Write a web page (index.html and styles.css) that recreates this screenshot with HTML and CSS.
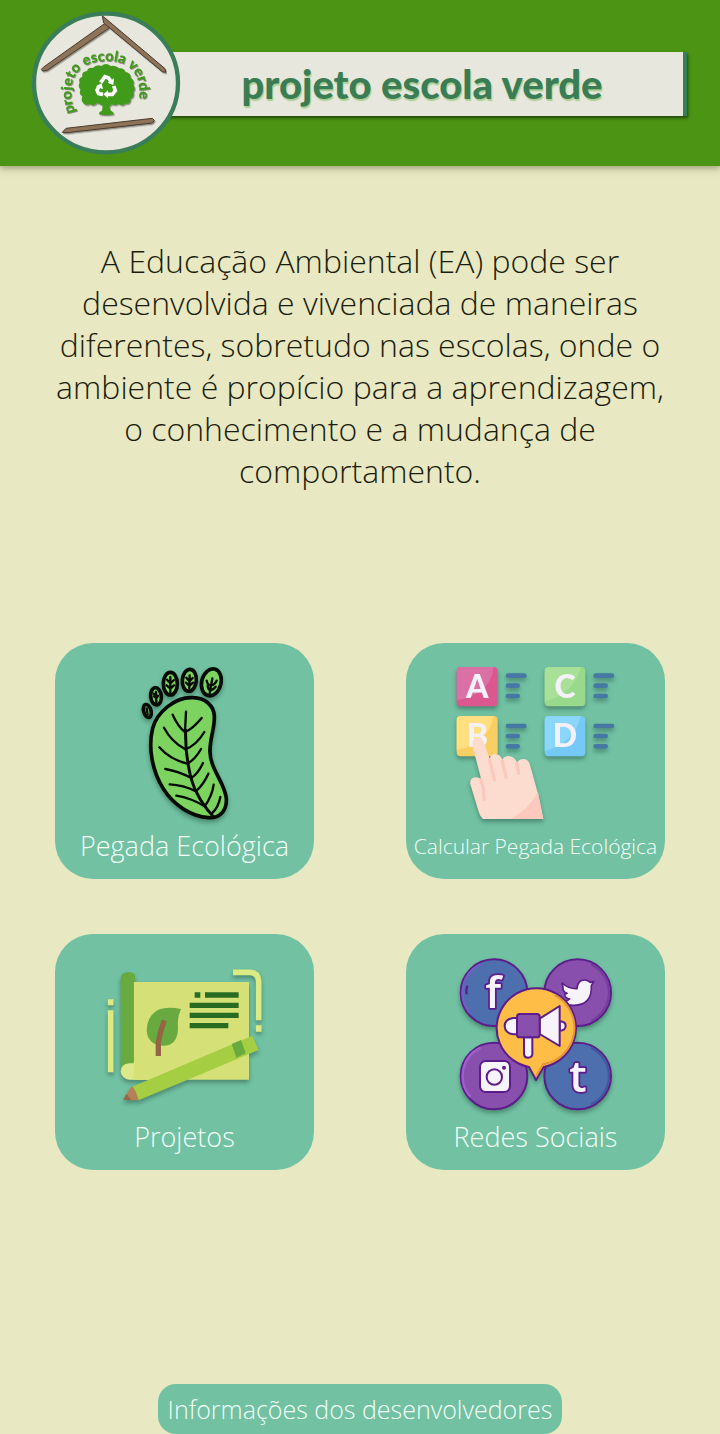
FILE: index.html
```html
<!DOCTYPE html>
<html lang="pt-BR">
<head>
<meta charset="utf-8">
<meta name="viewport" content="width=device-width, initial-scale=1">
<title>Projeto Escola Verde</title>
<link rel="stylesheet" href="styles.css">
</head>
<body class="page">
<header class="header">
  <svg class="emblem" viewBox="28 22 456 456" aria-hidden="true">
    <defs>
      <path id="arc" d="M166 338C134 232 178 184 262 184C345 184 376 240 350 340"/>
    </defs>
    <ellipse cx="259" cy="250" rx="216" ry="208" fill="#e7e7dd" stroke="#3a7d59" stroke-width="13"/>
    <g class="emblem-beams" stroke="#4a3a2e" stroke-width="3" stroke-linejoin="round">
      <path fill="#8d7459" d="M65 209L72 202L256 71L270 78L267 86L82 212L69 214Z"/>
      <path fill="#8d7459" d="M248 49L256 55L436 207L438 218L428 216L252 70Z"/>
      <path fill="#8d7459" d="M128 398L139 386L398 356L404 362L398 370L141 399Z"/>
    </g>
    <g class="emblem-tree">
      <path fill="#419b1b" d="M252 346L238 344Q236 337 247 333L249 319Q239 309 231 311Q218 322 211 312Q199 320 191 310Q182 302 189 289Q175 284 183 270Q173 260 180 249Q174 236 188 231Q185 216 202 214Q206 202 220 205Q230 193 245 199Q259 187 273 199Q288 195 298 206Q313 204 317 217Q334 219 333 235Q347 241 340 255Q350 265 341 276Q345 291 333 296Q333 315 317 312Q307 322 297 312Q284 319 277 314L269 320L272 333Q283 336 282 344L268 346Z"/>
      <g fill="none" stroke="#fff" stroke-width="11">
        <path d="M243 249L256 231L267 235L276 249"/>
        <path d="M282 259L287 273L278 284L262 284"/>
        <path d="M250 284L237 282L232 271L240 257"/>
      </g>
      <path fill="#fff" d="M283 236L281 256L264 249ZM265 272L265 296L251 284ZM229 260L246 251L250 269Z"/>
    </g>
    <text class="emblem-text"><textPath href="#arc" startOffset="0">projeto escola verde</textPath></text>
  </svg>
  <h1 class="banner">projeto escola verde</h1>
</header>

<main class="content">
  <p class="intro">A Educação Ambiental (EA) pode ser desenvolvida e vivenciada de maneiras diferentes, sobretudo nas escolas, onde o ambiente é propício para a aprendizagem, o conhecimento e a mudança de comportamento.</p>

  <nav class="menu">
    <a class="card" href="#pegada">
      <svg class="card-icon" viewBox="150 90 510 480" aria-hidden="true">
        <g fill="#7dd35f" stroke="#050a04" stroke-width="11">
          <path d="M430 188C375 184 320 233 308 280C293 340 308 412 341 463C371 511 425 545 475 548C507 551 531 528 529 491C526 444 478 400 480 347C480 307 494 283 493 244C492 211 464 189 430 188Z"/>
          <ellipse cx="484" cy="142" rx="29" ry="41" transform="rotate(14 484 142)"/>
          <ellipse cx="418" cy="136" rx="21" ry="33" transform="rotate(5 418 136)"/>
          <ellipse cx="361" cy="146" rx="21" ry="34"/>
          <ellipse cx="318" cy="184" rx="16" ry="26" transform="rotate(-6 318 184)"/>
          <ellipse cx="292" cy="228" rx="11" ry="20" transform="rotate(-16 292 228)"/>
        </g>
        <g fill="none" stroke="#050a04" stroke-width="7" stroke-linecap="round" stroke-linejoin="round">
          <path stroke-width="9" d="M407 286C405 350 417 430 440 473Q457 509 489 544"/>
          <path d="M408 230L405 290M368 239Q384 275 405 291Q428 282 455 249M342 278Q364 320 406 343Q440 330 463 291M328 337Q360 374 412 386Q436 373 453 342M346 402Q386 409 424 429Q444 416 459 384M359 448Q400 450 438 469Q462 446 475 416M379 482Q423 489 464 514Q486 484 491 449M485 536Q506 516 511 486"/>
          <path d="M479 175L487 130M470 137Q472 151 483 151Q495 150 500 137M473 152Q474 164 481 167Q490 164 497 155M418 161L419 121M409 128L418 139L428 129M408 143L418 153L429 143M361 173L361 126M351 134L361 145L372 135M350 151L361 161L372 151M319 203L318 171M312 184L319 190L324 182M311 176L318 180M293 238L290 220"/>
        </g>
      </svg>
      <span class="card-label">Pegada Ecológica</span>
    </a>

    <a class="card" href="#calcular">
      <svg class="card-icon" viewBox="152 90 510 480" aria-hidden="true">
        <g>
          <rect x="169" y="96" width="123" height="118" rx="12" fill="#dc5790"/>
          <path fill="#db70a5" d="M181 96H280Q270 180 169 196V108Q169 96 181 96Z"/>
          <rect x="433" y="96" width="122" height="118" rx="12" fill="#99d98c"/>
          <path fill="#a9e097" d="M445 96H542Q520 176 433 200V108Q433 96 445 96Z"/>
          <rect x="169" y="243" width="123" height="121" rx="12" fill="#f9ce63"/>
          <path fill="#ffdf80" d="M181 243H280Q262 330 169 345V255Q169 243 181 243Z"/>
          <rect x="433" y="243" width="122" height="121" rx="12" fill="#75c9f7"/>
          <path fill="#8bd6fb" d="M445 243H542Q522 325 433 348V255Q433 243 445 243Z"/>
        </g>
        <g class="key-letters">
          <text x="231" y="188">A</text>
          <text x="494" y="188">C</text>
          <text x="231" y="337">B</text>
          <text x="494" y="337">D</text>
        </g>
        <path fill="none" stroke="#4678a4" stroke-width="14" stroke-linecap="round" d="M323 122H372M323 152H352M323 183H352M586 122H635M586 152H616M586 183H616M323 273H372M323 303H352M323 334H352M586 273H635M586 303H616M586 334H616"/>
        <path fill="#fddcd0" d="M248 552Q239 544 235 530L210 448Q207 427 229 427L242 431L217 334Q213 313 229 308Q246 307 251 323L268 371Q272 357 285 357Q300 358 306 374Q311 363 326 363Q343 365 350 382Q358 371 371 372Q385 374 389 390L413 476L429 552Z"/>
        <path fill="#fdc8bd" d="M413 471L429 552H331Q382 526 413 471Z"/>
        <path fill="none" stroke="#fac9bc" stroke-width="10" stroke-linecap="round" d="M268 374L282 435M306 378L317 427M349 386L355 415M242 434Q252 462 251 494"/>
      </svg>
      <span class="card-label card-label--small">Calcular Pegada Ecológica</span>
    </a>

    <a class="card" href="#projetos">
      <svg class="card-icon" viewBox="150 92 510 480" aria-hidden="true">
        <path fill="#d5e176" d="M251 170H597V463H251Z"/>
        <path fill="#69aa40" d="M212 440V160Q214 140 235 140Q251 140 255 151V170H251V430Z"/>
        <path fill="#dce98a" d="M212 439Q214 415 238 414H297V463H238Q216 460 212 439Z"/>
        <path fill="#d5e176" d="M251 410H320V463H251Z"/>
        <path fill="none" stroke="#dcea83" stroke-width="17" stroke-linejoin="round" d="M182 255V441M182 222V240M549 141H601Q625 143 626 168V285M626 300V319"/>
        <path fill="#69aa40" d="M393 251Q381 275 384 310Q382 361 340 361Q293 360 290 315Q290 276 320 256Q347 242 393 251Z"/>
        <path fill="none" stroke="#936545" stroke-width="16" d="M325 392V350Q330 319 343 285"/>
        <path fill="none" stroke="#286c24" stroke-width="16" d="M434 209H451M465 209H566M419 240H566M419 270H566M419 301H535"/>
        <path fill="#a5ce42" d="M245 485L607 331L626 374L266 525Z"/>
        <path fill="#69aa40" d="M545 356L573 344L587 384L559 397Z"/>
        <path fill="#b58057" d="M245 482Q256 489 266 525L220 524Z"/>
        <path fill="#936545" d="M229 506L244 524H220Z"/>
      </svg>
      <span class="card-label">Projetos</span>
    </a>

    <a class="card" href="#redes">
      <svg class="card-icon" viewBox="152 92 510 480" aria-hidden="true">
        <g stroke="#5d1c8b" stroke-width="6">
          <circle cx="281" cy="202" r="100" fill="#4d6fae"/>
          <circle cx="532" cy="202" r="100" fill="#8850ac"/>
          <circle cx="281" cy="452" r="100" fill="#8850ac"/>
          <circle cx="532" cy="452" r="100" fill="#4d6fae"/>
        </g>
        <g fill="none" stroke-width="7">
          <path stroke="#6d61c3" d="M241 117A94 94 0 0 0 211 265"/>
          <path stroke="#a15dcb" d="M241 367A94 94 0 0 0 211 515"/>
          <path stroke="#753f9c" d="M572 117A94 94 0 0 1 572 287"/>
          <path stroke="#43589c" d="M572 367A94 94 0 0 1 572 537"/>
          <path stroke="#5d1c8b" d="M201 181Q196 193 199 207"/>
        </g>
        <g class="network-letters">
          <text x="279" y="249">f</text>
          <text x="533" y="499">t</text>
        </g>
        <path fill="#f7f3fa" stroke="#5d1c8b" stroke-width="5" stroke-linejoin="round" d="M485 173Q505 191 530 190Q532 163 554 164Q565 165 569 171L580 169L573 181Q576 238 522 240Q500 242 486 226Q499 230 508 221Q494 219 493 206L500 204Q486 198 488 186Z"/>
        <g stroke="#5d1c8b" stroke-width="6">
          <rect x="239" y="407" width="90" height="93" rx="17" fill="#f7f3fa"/>
          <circle cx="282" cy="455" r="23" fill="#f7f3fa"/>
          <circle cx="311" cy="427" r="3"/>
          <path fill="#fdbd47" stroke-linejoin="round" d="M386 425A119 119 0 1 1 430 425L407 464Z"/>
        </g>
        <path fill="none" stroke="#e49639" stroke-width="6" d="M463 209A111 111 0 0 1 428 417L407 453"/>
        <g fill="#f7f3fa" stroke="#5d1c8b" stroke-width="6" stroke-linejoin="round">
          <path d="M350 278H338Q313 282 313 302Q314 323 338 327H350Z"/>
          <path d="M478 288Q496 289 496 302Q495 316 478 316Z"/>
          <path d="M371 336V387Q372 397 383 397Q395 396 396 387V336Z"/>
          <path d="M418 280L478 242V362L418 326Z"/>
          <rect x="350" y="266" width="68" height="70" rx="8" fill="#8850ac"/>
        </g>
      </svg>
      <span class="card-label">Redes Sociais</span>
    </a>
  </nav>
</main>

<footer class="footer">
  <button class="info-button" type="button">Informações dos desenvolvedores</button>
</footer>
</body>
</html>
```
FILE: styles.css
```css
* {
  box-sizing: border-box;
}

.page {
  display: flex;
  flex-direction: column;
  min-height: 100vh;
  margin: 0;
  background: #e8e8c3;
  color: #1b1d0c;
  font-family: "Open Sans", "Noto Sans", sans-serif;
  font-weight: 300;
}

.header {
  display: flex;
  align-items: center;
  padding: 7px 33px 7px 29px;
  background: #4c9413;
  box-shadow: 0 2px 7px rgba(70, 70, 30, 0.5);
}

.emblem {
  position: relative;
  flex: none;
  width: 152px;
  height: 152px;
}

.emblem-beams,
.emblem-tree {
  filter: drop-shadow(3px 4px 2px rgba(40, 40, 30, 0.45));
}

.emblem-text {
  fill: #419b1b;
  font: 900 44px Lato, sans-serif;
  filter: drop-shadow(2px 3px 1px rgba(40, 40, 30, 0.5));
}

.banner {
  flex: 1;
  height: 64px;
  margin: 2px 0 0 -20px;
  border-right: 4px solid #3a7d59;
  background: #e7e7dd;
  box-shadow: 1px 2px 3px rgba(20, 50, 10, 0.8);
  color: #3a7d55;
  font: 900 40px/64px Lato, sans-serif;
  text-align: center;
  text-shadow: 1px 2px 1px #a9cf94;
  white-space: nowrap;
}

.content {
  padding: 74px 55px 0;
}

.intro {
  margin: 0 0 151px;
  font-size: 32px;
  line-height: 42px;
  text-align: center;
}

.menu {
  display: grid;
  grid-template-columns: 1fr 1fr;
  gap: 55px 92px;
}

.card {
  display: flex;
  flex-direction: column;
  align-items: center;
  padding: 22px 0 16px;
  border-radius: 38px;
  background: #71c1a2;
  color: #f1fff8;
  text-decoration: none;
}

.card-icon {
  width: 170px;
  height: 160px;
  filter: drop-shadow(0 3px 2px rgba(30, 70, 60, 0.45));
}

.card-label {
  margin-top: 4px;
  font-size: 27px;
  line-height: 34px;
  white-space: nowrap;
}

.card-label--small {
  font-size: 21px;
}

.key-letters {
  fill: #f4f1fa;
  font: 900 96px Lato, sans-serif;
  text-anchor: middle;
}

.network-letters {
  fill: #f7f3fa;
  stroke: #5d1c8b;
  stroke-width: 11px;
  stroke-linejoin: round;
  paint-order: stroke;
  font: 600 132px "Open Sans", sans-serif;
  text-anchor: middle;
}

.footer {
  display: flex;
  justify-content: center;
  margin-top: auto;
}

.info-button {
  padding: 8px 10px;
  border: 0;
  border-radius: 18px;
  background: #71c1a2;
  color: #f1fff8;
  font: 300 25px/34px "Open Sans", "Noto Sans", sans-serif;
}
```
